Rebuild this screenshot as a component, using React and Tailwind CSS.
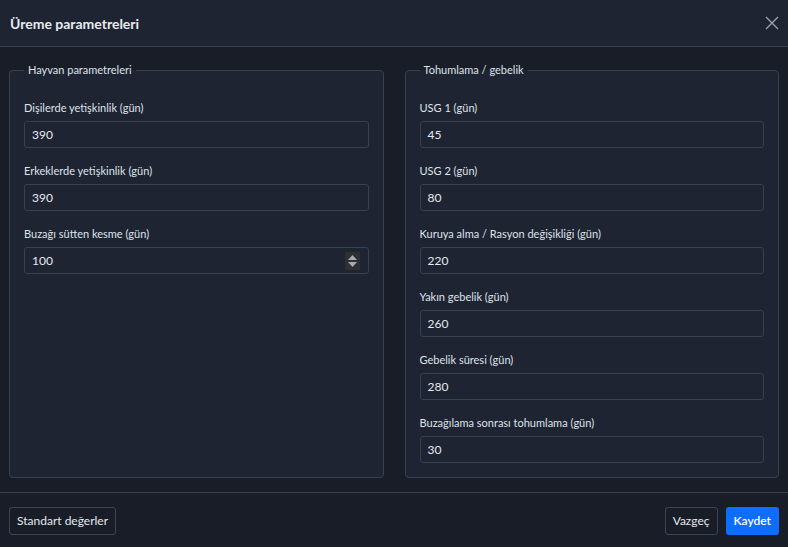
import React from "react";

const font = { fontFamily: 'Lato, "Noto Sans", "Liberation Sans", sans-serif' };

function Field({ label, value, spinner }) {
  return (
    <div className="flex flex-col">
      <label className="text-[11px] leading-[14px] text-[#dfe3ea] mb-[6px]">{label}</label>
      <div className="relative h-[27px] rounded-[3px] border border-[#364152] bg-[#1e2432] flex items-center px-[7px]">
        <span className="text-[12px] text-[#e6e9ee]">{value}</span>
        {spinner && (
          <div className="absolute right-[8px] top-[4px] w-[15px] h-[18px] bg-[#2f3034] flex flex-col items-center justify-center gap-[2px]">
            <svg width="9" height="5" viewBox="0 0 9 5"><path d="M0 5 L4.5 0 L9 5 Z" fill="#a8abb0" /></svg>
            <svg width="9" height="5" viewBox="0 0 9 5"><path d="M0 0 L4.5 5 L9 0 Z" fill="#a8abb0" /></svg>
          </div>
        )}
      </div>
    </div>
  );
}

function Group({ title, fields }) {
  return (
    <fieldset className="relative flex-1 rounded-[4px] border border-[#364152] bg-[#1e2432] px-[14px] pt-[22px]">
      <legend className="px-[4px] text-[11px] leading-[14px] text-[#dfe3ea]">{title}</legend>
      <div className="flex flex-col gap-[16px] pt-[2px]">
        {fields.map((f) => (
          <Field key={f.label} {...f} />
        ))}
      </div>
    </fieldset>
  );
}

export default function App() {
  return (
    <div style={font} className="w-[788px] h-[547px] bg-[#181d27] flex flex-col">
      <div className="h-[47px] shrink-0 bg-[#1e2432] border-b border-[#354050] flex items-center justify-between pl-[10px] pr-[9px]">
        <h1 className="text-[14px] font-bold text-[#e8ebf0]">Üreme parametreleri</h1>
        <svg width="14" height="14" viewBox="0 0 14 14">
          <path d="M1 1 L13 13 M13 1 L1 13" stroke="#9aa1ab" strokeWidth="1.4" />
        </svg>
      </div>
      <div className="flex gap-[21px] px-[9px] pt-[16px] h-[431px]">
        <Group
          title="Hayvan parametreleri"
          fields={[
            { label: "Dişilerde yetişkinlik (gün)", value: "390" },
            { label: "Erkeklerde yetişkinlik (gün)", value: "390" },
            { label: "Buzağı sütten kesme (gün)", value: "100", spinner: true },
          ]}
        />
        <Group
          title="Tohumlama / gebelik"
          fields={[
            { label: "USG 1 (gün)", value: "45" },
            { label: "USG 2 (gün)", value: "80" },
            { label: "Kuruya alma / Rasyon değişikliği (gün)", value: "220" },
            { label: "Yakın gebelik (gün)", value: "260" },
            { label: "Gebelik süresi (gün)", value: "280" },
            { label: "Buzağılama sonrası tohumlama (gün)", value: "30" },
          ]}
        />
      </div>
      <div className="mt-[14px] border-t border-[#354050] flex items-center justify-between px-[9px] pt-[14px]">
        <button className="h-[28px] px-[7px] rounded-[3px] border border-[#3a4556] text-[12px] text-[#e6e9ee]">Standart değerler</button>
        <div className="flex gap-[8px]">
          <button className="h-[28px] px-[7px] rounded-[3px] border border-[#3a4556] text-[12px] text-[#e6e9ee]">Vazgeç</button>
          <button className="h-[28px] px-[8px] rounded-[3px] bg-[#0d6efd] text-[12px] font-semibold text-white">Kaydet</button>
        </div>
      </div>
    </div>
  );
}
